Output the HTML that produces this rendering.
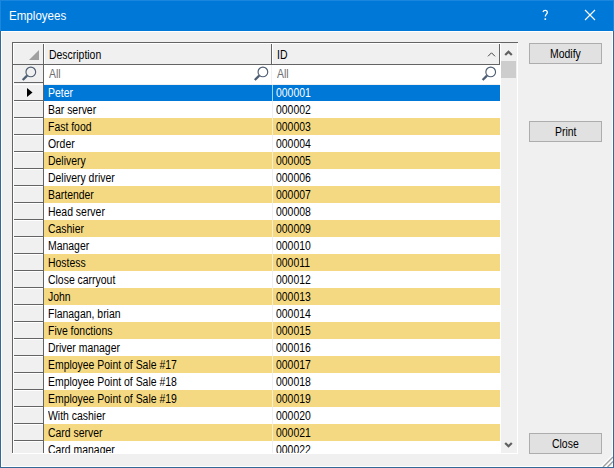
<!DOCTYPE html><html><head><meta charset="utf-8"><style>
*{margin:0;padding:0;box-sizing:border-box}
html,body{width:614px;height:468px;overflow:hidden;background:#F0F0F0;font-family:"Liberation Sans",sans-serif;font-size:12px;color:#000}
.a{position:absolute}
.t{position:absolute;white-space:nowrap;line-height:20px;transform:scaleX(0.87);transform-origin:0 0}
</style></head><body><div class="a" style="left:0px;top:0px;width:614px;height:31px;background:#0078D7"></div>
<div class="a" style="left:0px;top:0px;width:614px;height:1px;background:#1A86DE"></div>
<div class="a" style="left:0px;top:0px;width:1px;height:31px;background:#1A86DE"></div>
<div class="a" style="left:613px;top:0px;width:1px;height:31px;background:#1A86DE"></div>
<div class="a" style="left:0px;top:31px;width:1px;height:437px;background:#336997"></div>
<div class="a" style="left:613px;top:31px;width:1px;height:437px;background:#336997"></div>
<div class="a" style="left:0px;top:467px;width:614px;height:1px;background:#336997"></div>
<div class="a" style="left:1px;top:31px;width:612px;height:1px;background:#FFFFFF"></div>
<div class="a" style="left:1px;top:31px;width:1px;height:436px;background:#FFFFFF"></div>
<div class="a" style="left:612px;top:31px;width:1px;height:436px;background:#FFFFFF"></div>
<div class="a" style="left:1px;top:466px;width:612px;height:1px;background:#FFFFFF"></div>
<div class="t" style="left:9px;top:6px;color:#fff;transform:scaleX(0.965)">Employees</div>
<div class="a" style="left:12px;top:42px;width:506px;height:1px;background:#646464"></div>
<div class="a" style="left:12px;top:42px;width:1px;height:412px;background:#646464"></div>
<div class="a" style="left:517px;top:43px;width:1px;height:411px;background:#FFFFFF"></div>
<div class="a" style="left:13px;top:43px;width:487px;height:21px;background:#F0F0F0"></div>
<div class="a" style="left:13px;top:43px;width:487px;height:1px;background:#fff"></div>
<div class="a" style="left:13px;top:43px;width:1px;height:21px;background:#fff"></div>
<div class="a" style="left:44px;top:43px;width:227px;height:1px;background:#fff"></div>
<div class="a" style="left:44px;top:43px;width:1px;height:21px;background:#fff"></div>
<div class="a" style="left:272px;top:43px;width:227px;height:1px;background:#fff"></div>
<div class="a" style="left:272px;top:43px;width:1px;height:21px;background:#fff"></div>
<div class="a" style="left:43px;top:44px;width:1px;height:409px;background:#646464"></div>
<div class="a" style="left:271px;top:44px;width:1px;height:20px;background:#646464"></div>
<div class="a" style="left:499px;top:44px;width:1px;height:20px;background:#646464"></div>
<div class="a" style="left:13px;top:64px;width:487px;height:1px;background:#646464"></div>
<div class="t" style="left:48.5px;top:45px">Description</div>
<div class="t" style="left:277px;top:45px">ID</div>
<div class="a" style="left:13px;top:65px;width:30px;height:17px;background:#F0F0F0"></div>
<div class="a" style="left:44px;top:65px;width:456px;height:19px;background:#fff"></div>
<div class="a" style="left:271px;top:65px;width:1px;height:19px;background:#F0F0F0"></div>
<div class="a" style="left:13px;top:82px;width:30px;height:1px;background:#646464"></div>
<div class="t" style="left:49px;top:64px;color:#6D6D6D">All</div>
<div class="t" style="left:277px;top:64px;color:#6D6D6D">All</div>
<div class="a" style="left:44px;top:85px;width:456px;height:16px;background:#0078D7"></div>
<div class="a" style="left:272px;top:85px;width:1px;height:16px;background:#99D9F5"></div>
<div class="a" style="left:13px;top:84px;width:30px;height:1px;background:#fff"></div>
<div class="a" style="left:13px;top:100px;width:30px;height:1px;background:#646464"></div>
<div class="t" style="left:48px;top:83px;color:#FFFFFF">Peter</div>
<div class="t" style="left:276px;top:83px;color:#FFFFFF">000001</div>
<div class="a" style="left:44px;top:101px;width:456px;height:17px;background:#FFFFFF"></div>
<div class="a" style="left:272px;top:101px;width:1px;height:17px;background:#F0F0F0"></div>
<div class="a" style="left:13px;top:101px;width:30px;height:1px;background:#fff"></div>
<div class="a" style="left:13px;top:117px;width:30px;height:1px;background:#646464"></div>
<div class="t" style="left:48px;top:100px">Bar server</div>
<div class="t" style="left:276px;top:100px">000002</div>
<div class="a" style="left:44px;top:118px;width:456px;height:17px;background:#F5D982"></div>
<div class="a" style="left:272px;top:118px;width:1px;height:17px;background:#FBEFCB"></div>
<div class="a" style="left:13px;top:118px;width:30px;height:1px;background:#fff"></div>
<div class="a" style="left:13px;top:134px;width:30px;height:1px;background:#646464"></div>
<div class="t" style="left:48px;top:117px">Fast food</div>
<div class="t" style="left:276px;top:117px">000003</div>
<div class="a" style="left:44px;top:135px;width:456px;height:17px;background:#FFFFFF"></div>
<div class="a" style="left:272px;top:135px;width:1px;height:17px;background:#F0F0F0"></div>
<div class="a" style="left:13px;top:135px;width:30px;height:1px;background:#fff"></div>
<div class="a" style="left:13px;top:151px;width:30px;height:1px;background:#646464"></div>
<div class="t" style="left:48px;top:134px">Order</div>
<div class="t" style="left:276px;top:134px">000004</div>
<div class="a" style="left:44px;top:152px;width:456px;height:17px;background:#F5D982"></div>
<div class="a" style="left:272px;top:152px;width:1px;height:17px;background:#FBEFCB"></div>
<div class="a" style="left:13px;top:152px;width:30px;height:1px;background:#fff"></div>
<div class="a" style="left:13px;top:168px;width:30px;height:1px;background:#646464"></div>
<div class="t" style="left:48px;top:151px">Delivery</div>
<div class="t" style="left:276px;top:151px">000005</div>
<div class="a" style="left:44px;top:169px;width:456px;height:17px;background:#FFFFFF"></div>
<div class="a" style="left:272px;top:169px;width:1px;height:17px;background:#F0F0F0"></div>
<div class="a" style="left:13px;top:169px;width:30px;height:1px;background:#fff"></div>
<div class="a" style="left:13px;top:185px;width:30px;height:1px;background:#646464"></div>
<div class="t" style="left:48px;top:168px">Delivery driver</div>
<div class="t" style="left:276px;top:168px">000006</div>
<div class="a" style="left:44px;top:186px;width:456px;height:17px;background:#F5D982"></div>
<div class="a" style="left:272px;top:186px;width:1px;height:17px;background:#FBEFCB"></div>
<div class="a" style="left:13px;top:186px;width:30px;height:1px;background:#fff"></div>
<div class="a" style="left:13px;top:202px;width:30px;height:1px;background:#646464"></div>
<div class="t" style="left:48px;top:185px">Bartender</div>
<div class="t" style="left:276px;top:185px">000007</div>
<div class="a" style="left:44px;top:203px;width:456px;height:17px;background:#FFFFFF"></div>
<div class="a" style="left:272px;top:203px;width:1px;height:17px;background:#F0F0F0"></div>
<div class="a" style="left:13px;top:203px;width:30px;height:1px;background:#fff"></div>
<div class="a" style="left:13px;top:219px;width:30px;height:1px;background:#646464"></div>
<div class="t" style="left:48px;top:202px">Head server</div>
<div class="t" style="left:276px;top:202px">000008</div>
<div class="a" style="left:44px;top:220px;width:456px;height:17px;background:#F5D982"></div>
<div class="a" style="left:272px;top:220px;width:1px;height:17px;background:#FBEFCB"></div>
<div class="a" style="left:13px;top:220px;width:30px;height:1px;background:#fff"></div>
<div class="a" style="left:13px;top:236px;width:30px;height:1px;background:#646464"></div>
<div class="t" style="left:48px;top:219px">Cashier</div>
<div class="t" style="left:276px;top:219px">000009</div>
<div class="a" style="left:44px;top:237px;width:456px;height:17px;background:#FFFFFF"></div>
<div class="a" style="left:272px;top:237px;width:1px;height:17px;background:#F0F0F0"></div>
<div class="a" style="left:13px;top:237px;width:30px;height:1px;background:#fff"></div>
<div class="a" style="left:13px;top:253px;width:30px;height:1px;background:#646464"></div>
<div class="t" style="left:48px;top:236px">Manager</div>
<div class="t" style="left:276px;top:236px">000010</div>
<div class="a" style="left:44px;top:254px;width:456px;height:17px;background:#F5D982"></div>
<div class="a" style="left:272px;top:254px;width:1px;height:17px;background:#FBEFCB"></div>
<div class="a" style="left:13px;top:254px;width:30px;height:1px;background:#fff"></div>
<div class="a" style="left:13px;top:270px;width:30px;height:1px;background:#646464"></div>
<div class="t" style="left:48px;top:253px">Hostess</div>
<div class="t" style="left:276px;top:253px">000011</div>
<div class="a" style="left:44px;top:271px;width:456px;height:17px;background:#FFFFFF"></div>
<div class="a" style="left:272px;top:271px;width:1px;height:17px;background:#F0F0F0"></div>
<div class="a" style="left:13px;top:271px;width:30px;height:1px;background:#fff"></div>
<div class="a" style="left:13px;top:287px;width:30px;height:1px;background:#646464"></div>
<div class="t" style="left:48px;top:270px">Close carryout</div>
<div class="t" style="left:276px;top:270px">000012</div>
<div class="a" style="left:44px;top:288px;width:456px;height:17px;background:#F5D982"></div>
<div class="a" style="left:272px;top:288px;width:1px;height:17px;background:#FBEFCB"></div>
<div class="a" style="left:13px;top:288px;width:30px;height:1px;background:#fff"></div>
<div class="a" style="left:13px;top:304px;width:30px;height:1px;background:#646464"></div>
<div class="t" style="left:48px;top:287px">John</div>
<div class="t" style="left:276px;top:287px">000013</div>
<div class="a" style="left:44px;top:305px;width:456px;height:17px;background:#FFFFFF"></div>
<div class="a" style="left:272px;top:305px;width:1px;height:17px;background:#F0F0F0"></div>
<div class="a" style="left:13px;top:305px;width:30px;height:1px;background:#fff"></div>
<div class="a" style="left:13px;top:321px;width:30px;height:1px;background:#646464"></div>
<div class="t" style="left:48px;top:304px">Flanagan, brian</div>
<div class="t" style="left:276px;top:304px">000014</div>
<div class="a" style="left:44px;top:322px;width:456px;height:17px;background:#F5D982"></div>
<div class="a" style="left:272px;top:322px;width:1px;height:17px;background:#FBEFCB"></div>
<div class="a" style="left:13px;top:322px;width:30px;height:1px;background:#fff"></div>
<div class="a" style="left:13px;top:338px;width:30px;height:1px;background:#646464"></div>
<div class="t" style="left:48px;top:321px">Five fonctions</div>
<div class="t" style="left:276px;top:321px">000015</div>
<div class="a" style="left:44px;top:339px;width:456px;height:17px;background:#FFFFFF"></div>
<div class="a" style="left:272px;top:339px;width:1px;height:17px;background:#F0F0F0"></div>
<div class="a" style="left:13px;top:339px;width:30px;height:1px;background:#fff"></div>
<div class="a" style="left:13px;top:355px;width:30px;height:1px;background:#646464"></div>
<div class="t" style="left:48px;top:338px">Driver manager</div>
<div class="t" style="left:276px;top:338px">000016</div>
<div class="a" style="left:44px;top:356px;width:456px;height:17px;background:#F5D982"></div>
<div class="a" style="left:272px;top:356px;width:1px;height:17px;background:#FBEFCB"></div>
<div class="a" style="left:13px;top:356px;width:30px;height:1px;background:#fff"></div>
<div class="a" style="left:13px;top:372px;width:30px;height:1px;background:#646464"></div>
<div class="t" style="left:48px;top:355px">Employee Point of Sale #17</div>
<div class="t" style="left:276px;top:355px">000017</div>
<div class="a" style="left:44px;top:373px;width:456px;height:17px;background:#FFFFFF"></div>
<div class="a" style="left:272px;top:373px;width:1px;height:17px;background:#F0F0F0"></div>
<div class="a" style="left:13px;top:373px;width:30px;height:1px;background:#fff"></div>
<div class="a" style="left:13px;top:389px;width:30px;height:1px;background:#646464"></div>
<div class="t" style="left:48px;top:372px">Employee Point of Sale #18</div>
<div class="t" style="left:276px;top:372px">000018</div>
<div class="a" style="left:44px;top:390px;width:456px;height:17px;background:#F5D982"></div>
<div class="a" style="left:272px;top:390px;width:1px;height:17px;background:#FBEFCB"></div>
<div class="a" style="left:13px;top:390px;width:30px;height:1px;background:#fff"></div>
<div class="a" style="left:13px;top:406px;width:30px;height:1px;background:#646464"></div>
<div class="t" style="left:48px;top:389px">Employee Point of Sale #19</div>
<div class="t" style="left:276px;top:389px">000019</div>
<div class="a" style="left:44px;top:407px;width:456px;height:17px;background:#FFFFFF"></div>
<div class="a" style="left:272px;top:407px;width:1px;height:17px;background:#F0F0F0"></div>
<div class="a" style="left:13px;top:407px;width:30px;height:1px;background:#fff"></div>
<div class="a" style="left:13px;top:423px;width:30px;height:1px;background:#646464"></div>
<div class="t" style="left:48px;top:406px">With cashier</div>
<div class="t" style="left:276px;top:406px">000020</div>
<div class="a" style="left:44px;top:424px;width:456px;height:17px;background:#F5D982"></div>
<div class="a" style="left:272px;top:424px;width:1px;height:17px;background:#FBEFCB"></div>
<div class="a" style="left:13px;top:424px;width:30px;height:1px;background:#fff"></div>
<div class="a" style="left:13px;top:440px;width:30px;height:1px;background:#646464"></div>
<div class="t" style="left:48px;top:423px">Card server</div>
<div class="t" style="left:276px;top:423px">000021</div>
<div class="a" style="left:44px;top:441px;width:456px;height:17px;background:#FFFFFF"></div>
<div class="a" style="left:272px;top:441px;width:1px;height:17px;background:#F0F0F0"></div>
<div class="a" style="left:13px;top:441px;width:30px;height:1px;background:#fff"></div>
<div class="a" style="left:13px;top:457px;width:30px;height:1px;background:#646464"></div>
<div class="t" style="left:48px;top:440px">Card manager</div>
<div class="t" style="left:276px;top:440px">000022</div>
<div class="a" style="left:13px;top:65px;width:1px;height:388px;background:#fff"></div>
<div class="a" style="left:12px;top:453px;width:506px;height:13px;background:#F0F0F0"></div>
<div class="a" style="left:12px;top:453px;width:506px;height:1px;background:#FFFFFF"></div>
<div class="a" style="left:500px;top:43px;width:17px;height:410px;background:#F0F0F0"></div>
<div class="a" style="left:500px;top:43px;width:1px;height:410px;background:#FFFFFF"></div>
<div class="a" style="left:501px;top:61px;width:15px;height:17px;background:#CDCDCD"></div>
<div class="a" style="left:529px;top:43px;width:73px;height:21px;background:#E1E1E1;border:1px solid #ADADAD"></div>
<div class="a" style="left:529px;top:121px;width:73px;height:21px;background:#E1E1E1;border:1px solid #ADADAD"></div>
<div class="a" style="left:529px;top:433px;width:73px;height:21px;background:#E1E1E1;border:1px solid #ADADAD"></div>
<div class="t" style="left:550px;top:44px">Modify</div>
<div class="t" style="left:555px;top:122px">Print</div>
<div class="t" style="left:552px;top:434px">Close</div>
<svg class="a" style="left:0;top:0" width="614" height="468"><path d="M543 12 C543.4 10.6 544.3 10.4 545.2 10.4 C546.4 10.4 547.3 11.2 547.3 12.4 C547.3 14 545.3 14.4 545.3 16.6" fill="none" stroke="#fff" stroke-width="1.3"/><rect x="544.5" y="18.3" width="1.6" height="1.6" fill="#fff"/><path d="M585 10 L595 20 M595 10 L585 20" stroke="#fff" stroke-width="1.1"/><path d="M29 60 L39 60 L39 50 Z" fill="#A0A0A0"/><path d="M488 56.3 L491.5 52.8 L495 56.3" fill="none" stroke="#444" stroke-width="1"/><circle cx="30.8" cy="71.9" r="4.85" fill="none" stroke="#4E5E72" stroke-width="1.15"/><path d="M27.1 75.60000000000001 L22.700000000000003 80.0" stroke="#4E5E72" stroke-width="2.3"/><circle cx="262.9" cy="71.9" r="4.85" fill="none" stroke="#4E5E72" stroke-width="1.15"/><path d="M259.2 75.60000000000001 L254.79999999999998 80.0" stroke="#4E5E72" stroke-width="2.3"/><circle cx="490.7" cy="71.9" r="4.85" fill="none" stroke="#4E5E72" stroke-width="1.15"/><path d="M487.0 75.60000000000001 L482.59999999999997 80.0" stroke="#4E5E72" stroke-width="2.3"/><path d="M27 88 L27 97 L32.5 92.5 Z" fill="#000"/><path d="M505.2 55 L508.5 51.7 L511.8 55" fill="none" stroke="#606060" stroke-width="2.2" stroke-linejoin="miter"/><path d="M505.2 443 L508.5 446.3 L511.8 443" fill="none" stroke="#606060" stroke-width="2.2" stroke-linejoin="miter"/><path d="M601 467 L613 455 M605.5 467 L613 459.5" stroke="#fff" stroke-width="1.4"/><path d="M603 467 L613 457 M607.5 467 L613 461.5" stroke="#A0A0A0" stroke-width="1.4"/><rect x="613" y="31" width="1" height="437" fill="#336997"/><rect x="0" y="467" width="614" height="1" fill="#336997"/></svg></body></html>
